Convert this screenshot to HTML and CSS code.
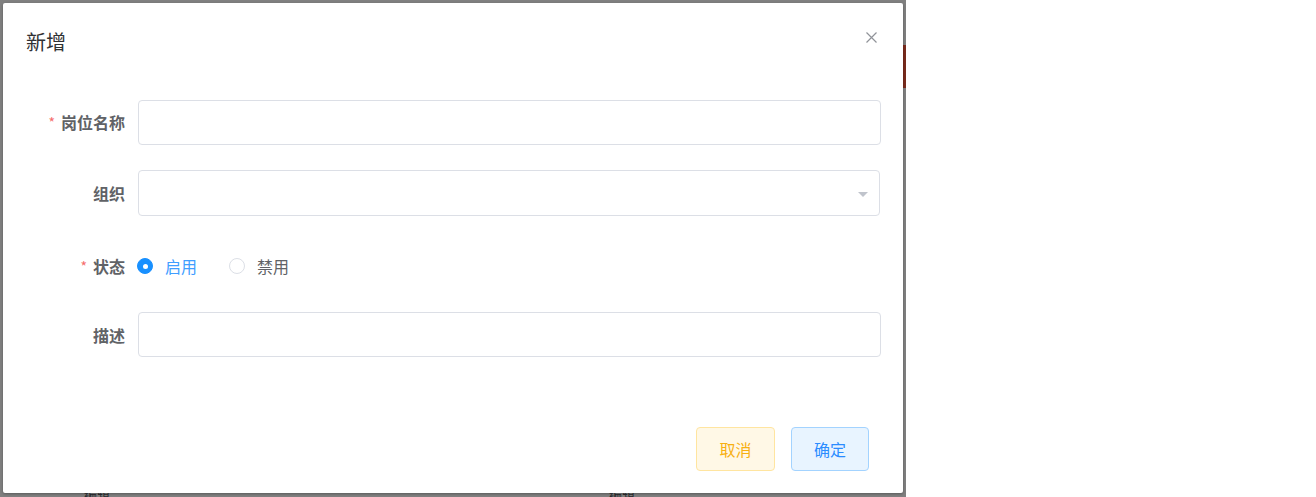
FILE: index.html
```html
<!DOCTYPE html>
<html lang="zh-CN">
<head>
<meta charset="utf-8">
<title>新增</title>
<link rel="stylesheet" href="styles.css">
</head>
<body>
<div class="page">
  <div class="backdrop">
    <div class="bg-accent"></div>
    <div class="bg-text bg-text-a">编辑</div>
    <div class="bg-text bg-text-b">编辑</div>
    <div class="dialog">
      <div class="dialog-header">
        <span class="dialog-title">新增</span>
        <svg class="close-icon" width="11" height="11" viewBox="0 0 11 11"><path d="M0.5 0.5L10.5 10.5M10.5 0.5L0.5 10.5" stroke="#909399" stroke-width="1.2" fill="none"/></svg>
      </div>
      <div class="form">
        <div class="form-item item-1">
          <label class="form-label"><span class="req">*</span>岗位名称</label>
          <div class="control"><div class="input"></div></div>
        </div>
        <div class="form-item item-2">
          <label class="form-label">组织</label>
          <div class="control"><div class="input select"><span class="caret"></span></div></div>
        </div>
        <div class="form-item item-3">
          <label class="form-label"><span class="req">*</span>状态</label>
          <div class="control radios">
            <span class="radio checked"><span class="radio-dot"></span><span class="radio-text">启用</span></span>
            <span class="radio"><span class="radio-dot"></span><span class="radio-text">禁用</span></span>
          </div>
        </div>
        <div class="form-item item-4">
          <label class="form-label">描述</label>
          <div class="control"><div class="input"></div></div>
        </div>
      </div>
      <div class="dialog-footer">
        <button class="btn btn-cancel">取消</button>
        <button class="btn btn-ok">确定</button>
      </div>
    </div>
  </div>
</div>
</body>
</html>
```

FILE: styles.css
```css
html, body {
  margin: 0;
  padding: 0;
  background: #ffffff;
}
body {
  font-family: "Noto Sans CJK SC", "Noto Sans", "Liberation Sans", sans-serif;
  width: 1316px;
  height: 497px;
  overflow: hidden;
}
.page {
  width: 1316px;
  height: 497px;
  display: flex;
}
.backdrop {
  position: relative;
  width: 906px;
  height: 497px;
  background: #808080;
}
.bg-accent {
  position: absolute;
  left: 903px;
  top: 45px;
  width: 3px;
  height: 43px;
  background: #7a2b1d;
}
.bg-text {
  position: absolute;
  top: 486px;
  font-size: 13px;
  line-height: 16px;
  color: #2b2c2f;
}
.bg-text-a { left: 84px; }
.bg-text-b { left: 609px; }
.dialog {
  position: absolute;
  left: 3px;
  top: 3px;
  width: 900px;
  height: 490px;
  background: #ffffff;
  border-radius: 2px;
  box-shadow: 0 1px 3px rgba(0, 0, 0, 0.3);
  display: flex;
  flex-direction: column;
}
.dialog-header {
  display: flex;
  justify-content: space-between;
  align-items: flex-start;
  padding: 29px 26px 0 23px;
}
.dialog-title {
  font-size: 20px;
  line-height: 20px;
  color: #303133;
}
.close-icon {
  display: block;
}
.form {
  margin-top: 48px;
  padding: 0 22px 0 20px;
  display: flex;
  flex-direction: column;
  gap: 24px;
}
.form-item {
  display: flex;
  align-items: center;
}
.item-1, .item-4 { height: 45px; }
.item-2 { height: 46px; margin-top: 1px; }
.item-3 { height: 48px; padding-top: 4px; box-sizing: border-box; }
.form-label {
  width: 115px;
  box-sizing: border-box;
  padding-right: 13px;
  text-align: right;
  font-size: 16px;
  font-weight: 700;
  color: #606266;
  line-height: 20px;
}
.req {
  color: #f56c6c;
  font-size: 14px;
  font-weight: 400;
  margin-right: 6px;
  position: relative;
  top: -1px;
}
.control {
  flex: 1;
  height: 100%;
  display: flex;
  align-items: center;
}
.input {
  width: 100%;
  height: 100%;
  box-sizing: border-box;
  border: 1px solid #dcdfe6;
  border-radius: 4px;
  background: #fff;
}
.select {
  display: flex;
  align-items: center;
  justify-content: flex-end;
  padding-right: 11px;
  margin-right: 1px;
}
.caret {
  width: 0;
  height: 0;
  border-left: 5px solid transparent;
  border-right: 5px solid transparent;
  border-top: 5px solid #c0c4cc;
  margin-top: 2px;
}
.radios {
  gap: 33px;
}
.radio {
  display: flex;
  align-items: center;
  font-size: 16px;
  line-height: 20px;
  color: #606266;
}
.radio-dot {
  width: 16px;
  height: 16px;
  box-sizing: border-box;
  border: 1px solid #dcdfe6;
  border-radius: 50%;
  background: #fff;
  margin-right: 12px;
  margin-left: -1px;
  display: flex;
  align-items: center;
  justify-content: center;
}
.checked .radio-dot {
  background: #1890ff;
  border-color: #1890ff;
}
.checked .radio-dot::after {
  content: "";
  width: 5px;
  height: 5px;
  border-radius: 50%;
  background: #fff;
}
.checked .radio-text {
  color: #409eff;
}
.dialog-footer {
  margin-top: auto;
  display: flex;
  justify-content: flex-end;
  gap: 16px;
  padding: 0 34px 22px 0;
}
.btn {
  width: 79px;
  height: 44px;
  box-sizing: border-box;
  border-radius: 4px;
  font-family: inherit;
  font-size: 16px;
  line-height: 20px;
  padding: 0;
  cursor: pointer;
}
.btn-ok { width: 78px; }
.btn-cancel {
  background: #fff8e6;
  border: 1px solid #ffe5a0;
  color: #f7b012;
}
.btn-ok {
  background: #e8f4ff;
  border: 1px solid #a3d3ff;
  color: #2b8cff;
}
```
